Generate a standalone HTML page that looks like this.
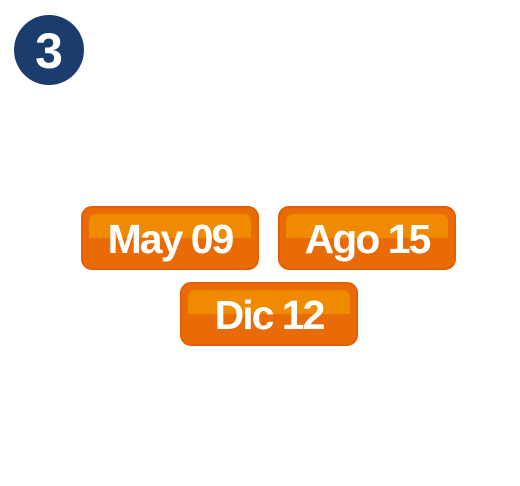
<!DOCTYPE html><html><head><style>
body{margin:0;width:520px;height:486px;background:#fff;position:relative;overflow:hidden;font-family:"Liberation Sans",sans-serif}
.c{position:absolute;left:14px;top:15px;width:70px;height:70px;border-radius:50%;background:#1a3d6e;color:#fff;font-weight:bold;font-size:50px;line-height:72px;text-align:center}
.b{position:absolute;width:178px;height:64px;border-radius:11px;background:#ea6a06;box-sizing:border-box;border:2px solid #e25f05}
.b:before{content:"";position:absolute;left:6px;right:6px;top:6px;height:24px;border-radius:7px 7px 0 0;background:#f08a00}
.b span{position:absolute;left:-10px;right:-10px;top:0;line-height:62px;text-align:center;color:#fff;font-weight:bold;font-size:41px;letter-spacing:-2px}
</style></head><body>
<div class="c">3</div>
<div class="b" style="left:81px;top:206px"><span>May 09</span></div>
<div class="b" style="left:278px;top:206px"><span>Ago 15</span></div>
<div class="b" style="left:180px;top:282px"><span>Dic 12</span></div>
</body></html>
